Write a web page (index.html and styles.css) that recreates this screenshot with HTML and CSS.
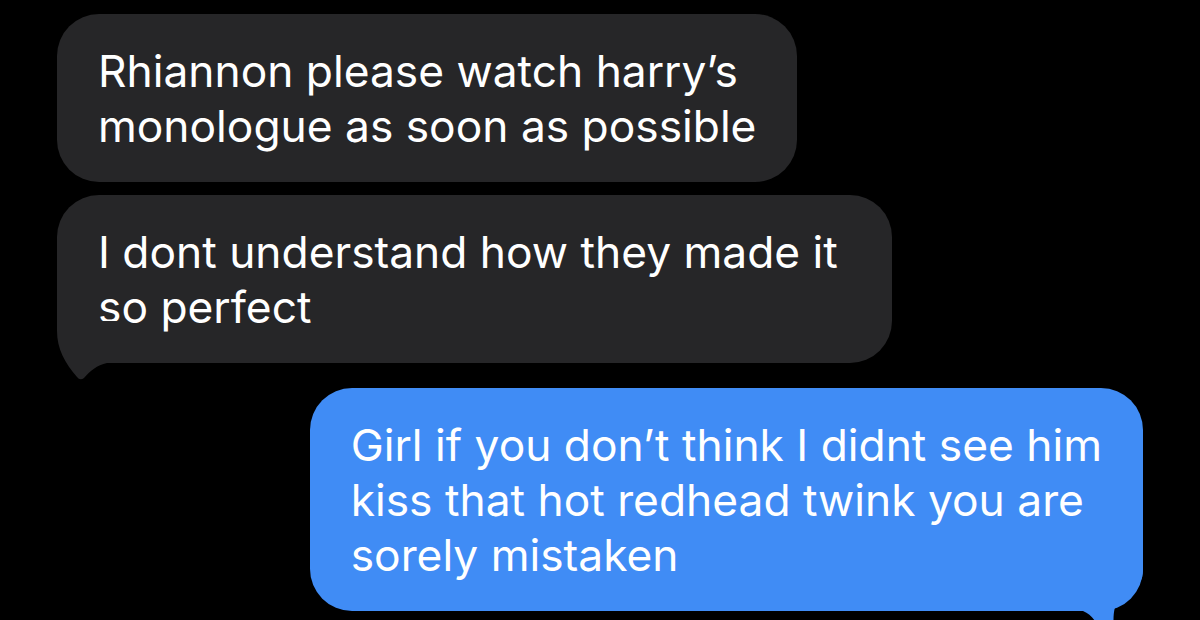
FILE: index.html
```html
<!DOCTYPE html>
<html lang="en">
<head>
<meta charset="utf-8">
<title>Messages</title>
<link rel="stylesheet" href="styles.css">
</head>
<body>
<main class="thread">
  <div class="msg msg-in">
    <p class="msg-text">Rhiannon please watch harry’s<br>monologue as soon as possible</p>
  </div>
  <div class="msg msg-in msg-last">
    <p class="msg-text">I dont understand how they made it<br>so perfect</p>
    <svg class="tail tail-in" viewBox="0 0 60 62" aria-hidden="true"><path d="M0 0 L0 10 C0 28 8 42 20 56 Q23 60 27 57 C33 50 40 44 50 42 L60 42 L60 0 Z"/></svg>
  </div>
  <div class="msg msg-out msg-last">
    <p class="msg-text">Girl if you don’t think I didnt see him<br>kiss that hot redhead twink you are<br>sorely mistaken</p>
    <svg class="tail tail-out" viewBox="0 0 70 100" aria-hidden="true"><path d="M70 0 L70 19 C70 38 52 44 44 53 C40 58 40 66 41 100 L30 100 C28 80 24 66 10 60 L0 60 L0 0 Z"/></svg>
  </div>
</main>
</body>
</html>
```

FILE: styles.css
```css
html, body {
  margin: 0;
  padding: 0;
  background: #000;
  height: 100%;
  overflow: hidden;
}

.thread {
  display: flex;
  flex-direction: column;
  align-items: flex-start;
  gap: 13px;
  padding: 14px 57px 0 57px;
  font-family: "Inter", "Liberation Sans", sans-serif;
}

.msg {
  position: relative;
  width: max-content;
  padding: 30px 41px 28px;
  border-radius: 42px;
  color: #fff;
}

.msg-text {
  margin: 0;
  font-size: 44.3px;
  line-height: 55px;
  letter-spacing: 0;
  white-space: nowrap;
}

.msg-in {
  background: #262628;
}

.msg-in.msg-last {
  padding-right: 54px;
}

.msg-out {
  align-self: flex-end;
  margin-top: 12px;
  background: #408cf5;
}

.tail {
  position: absolute;
  display: block;
}

.tail-in {
  left: 0;
  bottom: -20px;
  width: 60px;
  height: 62px;
  fill: #262628;
}

.tail-out {
  right: 0;
  bottom: -40px;
  width: 70px;
  height: 100px;
  fill: #408cf5;
}
```
